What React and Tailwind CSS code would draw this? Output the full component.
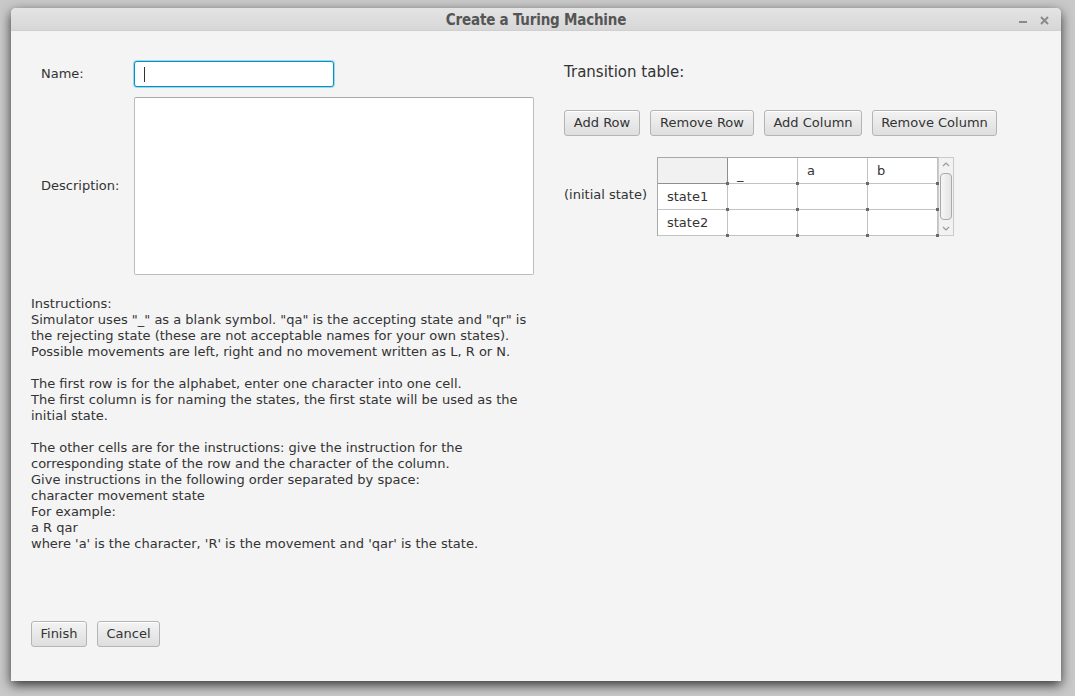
import React from "react";

const FONT = { fontFamily: '"DejaVu Sans", "Liberation Sans", sans-serif' };

function Btn({ children, w }) {
  return (
    <div
      className={`h-[26px] ${w} flex items-center justify-center rounded-[3px] border border-[#b4b4b4] bg-gradient-to-b from-[#f3f3f3] to-[#dedede] text-[13px] text-[#333] shadow-[inset_0_1px_0_#fff]`}
    >
      {children}
    </div>
  );
}

function Cell({ children, header, first }) {
  return (
    <div
      className={`relative h-[26px] w-[70px] flex items-center pl-[9px] text-[13px] text-[#333] border-r border-b ${
        header && first
          ? "bg-[#f1f1f1] border-[#8e8e8e]"
          : "bg-white border-[#c3c3c3]"
      }`}
    >
      {children}
      <span className="absolute right-[-2px] bottom-[-2px] w-[3px] h-[3px] bg-[#6a6a6a] z-10" />
    </div>
  );
}

export default function App() {
  const rows = [
    ["", "_", "a", "b"],
    ["state1", "", "", ""],
    ["state2", "", "", ""],
  ];
  return (
    <div
      className="w-[1075px] h-[696px] bg-[#c9c9c9] pt-[8px] pl-[11px] overflow-hidden"
      style={FONT}
    >
      <div className="w-[1050px] h-[673px] flex flex-col rounded-t-[5px] bg-[#f4f4f4] shadow-[0_4px_12px_rgba(0,0,0,0.75)]">
        {/* Title bar */}
        <div className="relative h-[23px] flex items-center justify-center rounded-t-[5px] bg-gradient-to-b from-[#e4e4e4] to-[#d7d7d7] border-b border-[#cfcfcf]">
          <span
            className="text-[15px] font-bold text-[#555] tracking-[-0.2px] mt-[3px]"
            style={{ fontFamily: '"DejaVu Sans Condensed", "DejaVu Sans", sans-serif' }}
          >
            Create a Turing Machine
          </span>
          <div className="absolute right-[12px] top-0 h-[23px] flex items-center gap-[13px] text-[#888]">
            <span className="block w-[8px] h-[2px] bg-[#8a8a8a] mt-[4px]" />
            <svg width="9" height="9" viewBox="0 0 9 9" className="mt-[1px]">
              <path d="M1 1 L8 8 M8 1 L1 8" stroke="#8a8a8a" strokeWidth="2" />
            </svg>
          </div>
        </div>

        {/* Content */}
        <div className="flex flex-1 text-[13px] text-[#333]">
          {/* Left column */}
          <div className="w-[533px] pl-[20px] pt-[30px] pb-[34px] flex flex-col">
            <div className="flex items-center">
              <div className="w-[103px] pl-[10px]">Name:</div>
              <div className="relative w-[200px] h-[26px] rounded-[3px] border border-[#0093c5] bg-white shadow-[0_0_0_1px_#9fd6ea]">
                <span className="absolute left-[9px] top-[5px] w-[1px] h-[15px] bg-[#333]" />
              </div>
            </div>
            <div className="flex items-center mt-[10px]">
              <div className="w-[103px] pl-[10px]">Description:</div>
              <div className="w-[400px] h-[178px] rounded-[2px] border border-[#bcbcbc] border-t-[#a9a9a9] bg-white" />
            </div>
            <div className="mt-[21px] leading-[16px] whitespace-pre">
              {`Instructions:
Simulator uses "_" as a blank symbol. "qa" is the accepting state and "qr" is
the rejecting state (these are not acceptable names for your own states).
Possible movements are left, right and no movement written as L, R or N.

The first row is for the alphabet, enter one character into one cell.
The first column is for naming the states, the first state will be used as the
initial state.

The other cells are for the instructions: give the instruction for the
corresponding state of the row and the character of the column.
Give instructions in the following order separated by space:
character movement state
For example:
a R qar
where 'a' is the character, 'R' is the movement and 'qar' is the state.`}
            </div>
            <div className="mt-auto flex gap-[10px]">
              <Btn w="w-[56px]">Finish</Btn>
              <Btn w="w-[63px]">Cancel</Btn>
            </div>
          </div>

          {/* Right column */}
          <div className="pl-[20px] pt-[30px]">
            <div className="text-[15px] leading-[20px] mt-[1px]">Transition table:</div>
            <div className="flex gap-[10px] mt-[28px]">
              <Btn w="w-[76px]">Add Row</Btn>
              <Btn w="w-[104px]">Remove Row</Btn>
              <Btn w="w-[98px]">Add Column</Btn>
              <Btn w="w-[125px]">Remove Column</Btn>
            </div>
            <div className="flex mt-[21px]">
              <div className="w-[93px] flex flex-col">
                <div className="h-[26px]" />
                <div className="h-[26px] flex items-center -mt-[1px]">(initial state)</div>
              </div>
              <div className="flex border-t border-l border-[#a8a8a8]">
                <div className="flex flex-col">
                  {rows.map((r, ri) => (
                    <div key={ri} className="flex">
                      {r.map((c, ci) => (
                        <Cell key={ci} header={ri === 0} first={ci === 0}>
                          {c === "_" ? <span className="mt-[8px]">_</span> : c}
                        </Cell>
                      ))}
                    </div>
                  ))}
                </div>
                <div className="w-[16px] -mt-[1px] bg-[#f2f2f2] border border-[#cacaca] flex flex-col items-center">
                  <svg width="10" height="12" viewBox="0 0 10 12" className="mt-[1px]">
                    <path d="M2 7 L5 4 L8 7" fill="none" stroke="#9a9a9a" strokeWidth="1.2" />
                  </svg>
                  <div className="w-[12px] flex-1 my-[2px] rounded-[4px] border border-[#a9a9a9] bg-gradient-to-r from-[#f6f6f6] to-[#e4e4e4]" />
                  <svg width="10" height="12" viewBox="0 0 10 12" className="mb-[1px]">
                    <path d="M2 5 L5 8 L8 5" fill="none" stroke="#9a9a9a" strokeWidth="1.2" />
                  </svg>
                </div>
              </div>
            </div>
          </div>
        </div>
      </div>
    </div>
  );
}
